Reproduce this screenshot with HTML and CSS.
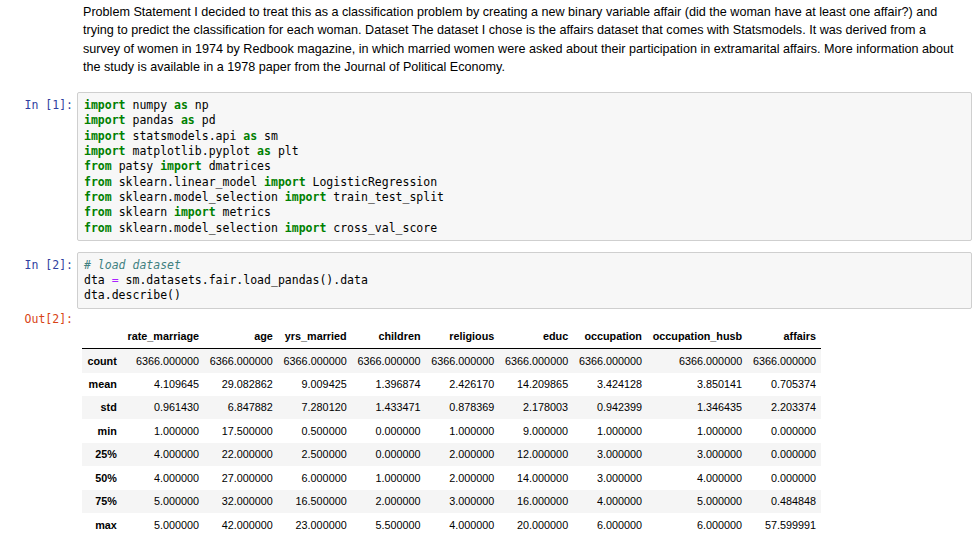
FILE: index.html
```html
<!DOCTYPE html>
<html>
<head>
<meta charset="utf-8">
<link rel="stylesheet" href="styles.css">
</head>
<body>
<div class="nb">
  <div class="cell text-cell">
    <div class="prompt"></div>
    <div class="md">Problem Statement I decided to treat this as a classification problem by creating a new binary variable affair (did the woman have at least one affair?) and trying to predict the classification for each woman. Dataset The dataset I chose is the affairs dataset that comes with Statsmodels. It was derived from a survey of women in 1974 by Redbook magazine, in which married women were asked about their participation in extramarital affairs. More information about the study is available in a 1978 paper from the Journal of Political Economy.</div>
  </div>

  <div class="cell code-cell first">
    <div class="prompt in">In&nbsp;[1]:</div>
    <pre class="input"><span class="k">import</span> numpy <span class="k">as</span> np
<span class="k">import</span> pandas <span class="k">as</span> pd
<span class="k">import</span> statsmodels.api <span class="k">as</span> sm
<span class="k">import</span> matplotlib.pyplot <span class="k">as</span> plt
<span class="k">from</span> patsy <span class="k">import</span> dmatrices
<span class="k">from</span> sklearn.linear_model <span class="k">import</span> LogisticRegression
<span class="k">from</span> sklearn.model_selection <span class="k">import</span> train_test_split
<span class="k">from</span> sklearn <span class="k">import</span> metrics
<span class="k">from</span> sklearn.model_selection <span class="k">import</span> cross_val_score</pre>
  </div>

  <div class="cell code-cell second">
    <div class="prompt in">In&nbsp;[2]:</div>
    <pre class="input"><span class="c"># load dataset</span>
dta <span class="o">=</span> sm.datasets.fair.load_pandas().data
dta.describe()</pre>
  </div>

  <div class="cell out-cell">
    <div class="prompt out">Out[2]:</div>
    <div class="output">
      <table class="df">
        <thead>
          <tr><th></th><th>rate_marriage</th><th>age</th><th>yrs_married</th><th>children</th><th>religious</th><th>educ</th><th>occupation</th><th>occupation_husb</th><th>affairs</th></tr>
        </thead>
        <tbody>
          <tr><th>count</th><td>6366.000000</td><td>6366.000000</td><td>6366.000000</td><td>6366.000000</td><td>6366.000000</td><td>6366.000000</td><td>6366.000000</td><td>6366.000000</td><td>6366.000000</td></tr>
          <tr><th>mean</th><td>4.109645</td><td>29.082862</td><td>9.009425</td><td>1.396874</td><td>2.426170</td><td>14.209865</td><td>3.424128</td><td>3.850141</td><td>0.705374</td></tr>
          <tr><th>std</th><td>0.961430</td><td>6.847882</td><td>7.280120</td><td>1.433471</td><td>0.878369</td><td>2.178003</td><td>0.942399</td><td>1.346435</td><td>2.203374</td></tr>
          <tr><th>min</th><td>1.000000</td><td>17.500000</td><td>0.500000</td><td>0.000000</td><td>1.000000</td><td>9.000000</td><td>1.000000</td><td>1.000000</td><td>0.000000</td></tr>
          <tr><th>25%</th><td>4.000000</td><td>22.000000</td><td>2.500000</td><td>0.000000</td><td>2.000000</td><td>12.000000</td><td>3.000000</td><td>3.000000</td><td>0.000000</td></tr>
          <tr><th>50%</th><td>4.000000</td><td>27.000000</td><td>6.000000</td><td>1.000000</td><td>2.000000</td><td>14.000000</td><td>3.000000</td><td>4.000000</td><td>0.000000</td></tr>
          <tr><th>75%</th><td>5.000000</td><td>32.000000</td><td>16.500000</td><td>2.000000</td><td>3.000000</td><td>16.000000</td><td>4.000000</td><td>5.000000</td><td>0.484848</td></tr>
          <tr><th>max</th><td>5.000000</td><td>42.000000</td><td>23.000000</td><td>5.500000</td><td>4.000000</td><td>20.000000</td><td>6.000000</td><td>6.000000</td><td>57.599991</td></tr>
        </tbody>
      </table>
    </div>
  </div>
</div>
</body>
</html>
```

FILE: styles.css
```css
html, body {
  margin: 0;
  padding: 0;
  background: #ffffff;
}

body {
  font-family: "Liberation Sans", Arial, sans-serif;
  color: #000000;
  overflow: hidden;
}

.nb {
  width: 973px;
}

.cell {
  display: flex;
  align-items: flex-start;
}

.prompt {
  flex: 0 0 73px;
  padding-right: 4px;
  text-align: right;
  font-family: "DejaVu Sans Mono", monospace;
  font-size: 11.5px;
  line-height: 15.3px;
  white-space: nowrap;
}

.prompt.in {
  color: #303f9f;
  padding-top: 6px;
}

.prompt.out {
  color: #d84315;
  padding-top: 1px;
}

.text-cell {
  padding-top: 3px;
}

.md {
  flex: 0 0 882px;
  padding-left: 6px;
  font-size: 12.6px;
  line-height: 18.3px;
}

.code-cell.first {
  margin-top: 16px;
}

.code-cell.second {
  margin-top: 11px;
}

.input {
  flex: 1;
  margin: 0 1px 0 0;
  padding: 5px 6px 4px;
  background: #f7f7f7;
  border: 1px solid #cfcfcf;
  border-radius: 2px;
  font-family: "DejaVu Sans Mono", monospace;
  font-size: 11.5px;
  line-height: 15.3px;
  color: #000000;
  white-space: pre;
}

.k {
  color: #008000;
  font-weight: bold;
}

.o {
  color: #aa22ff;
}

.c {
  color: #408080;
  font-style: italic;
}

.out-cell {
  padding-top: 2px;
}

.output {
  padding-left: 5px;
  padding-top: 14px;
}

.df {
  border-collapse: collapse;
  border-spacing: 0;
  font-size: 10.8px;
  color: #000000;
}

.df th,
.df td {
  padding: 5.5px 5.4px;
  text-align: right;
  vertical-align: middle;
  white-space: nowrap;
  line-height: 12.4px;
}

.df th {
  font-weight: bold;
}

.df thead tr {
  border-bottom: 1px solid #000000;
}

.df tbody tr:nth-child(odd) {
  background: #f5f5f5;
}
```
